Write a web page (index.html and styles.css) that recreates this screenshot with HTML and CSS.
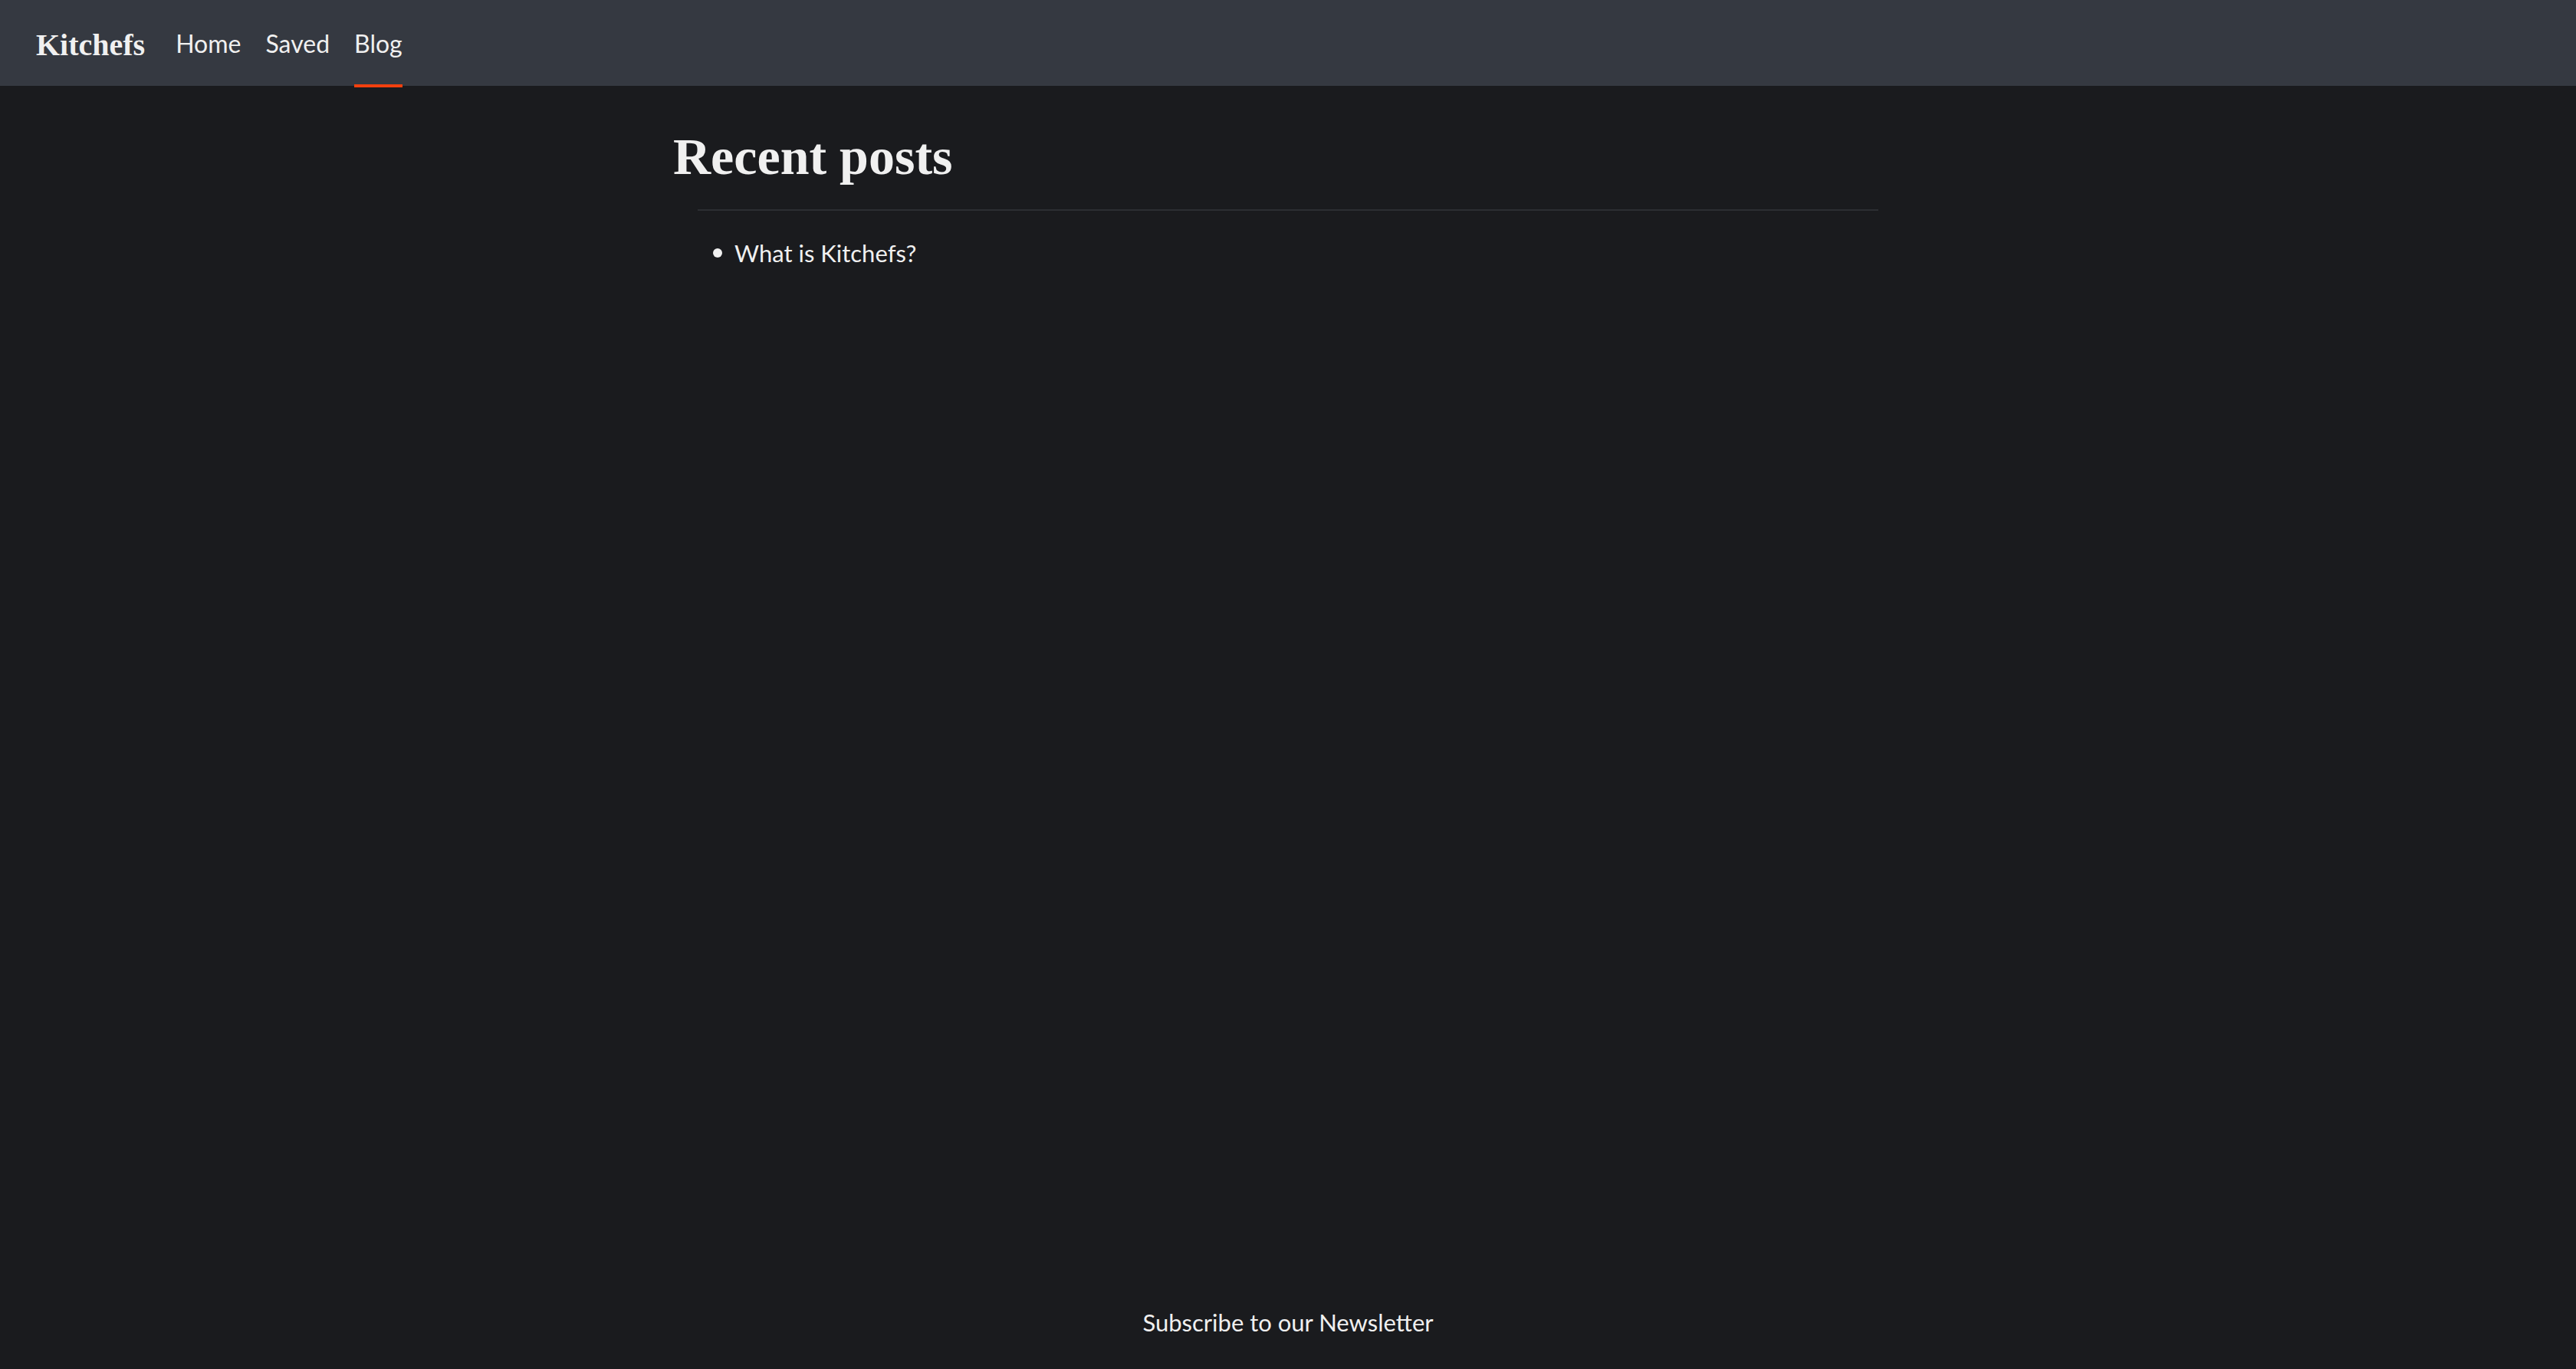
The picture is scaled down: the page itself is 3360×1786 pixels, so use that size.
FILE: index.html
```html
<!DOCTYPE html>
<html>
<head>
<meta charset="utf-8">
<link rel="stylesheet" href="styles.css">
</head>
<body>
<div class="page">
  <header class="nav">
    <a class="brand" href="#">Kitchefs</a>
    <nav class="links">
      <a class="link" href="#">Home</a>
      <a class="link" href="#">Saved</a>
      <a class="link active" href="#">Blog</a>
    </nav>
  </header>
  <main class="main">
    <h1 class="title">Recent posts</h1>
    <hr class="rule">
    <ul class="posts">
      <li class="post"><a href="#">What is Kitchefs?</a></li>
    </ul>
  </main>
  <footer class="footer">Subscribe to our Newsletter</footer>
</div>
</body>
</html>
```
FILE: styles.css
```css
html, body {
  margin: 0;
  padding: 0;
  background: #1a1b1e;
  color: #f0f0f0;
  font-family: "Lato", "Open Sans", sans-serif;
}
a { color: inherit; text-decoration: none; }
.page {
  min-height: 1786px;
  display: flex;
  flex-direction: column;
}
.nav {
  height: 112px;
  background: #353941;
  display: flex;
  align-items: center;
  padding-left: 47px;
  box-sizing: border-box;
}
.brand {
  font-family: "Liberation Serif", "DejaVu Serif", serif;
  font-weight: bold;
  font-size: 40px;
  margin-right: 40px;
  padding-top: 5px;
}
.links {
  display: flex;
  gap: 32px;
  height: 100%;
  align-items: center;
}
.link {
  font-size: 32px;
  height: 100%;
  display: flex;
  align-items: center;
  position: relative;
}
.link.active::after {
  content: "";
  position: absolute;
  left: 0;
  right: 0;
  bottom: -2px;
  height: 4px;
  background: #f2400e;
}
.main {
  flex: 1;
  width: 1604px;
  margin: 0 auto;
}
.title {
  font-family: "Liberation Serif", "DejaVu Serif", serif;
  font-weight: bold;
  font-size: 68px;
  line-height: 1;
  margin: 0;
  padding-top: 58px;
}
.rule {
  border: none;
  height: 2px;
  background: #2c2e32;
  margin: 35px 32px 0 32px;
}
.posts {
  list-style: none;
  margin: 0;
  padding: 36px 0 0 52px;
  font-size: 31px;
}
.post {
  display: flex;
  align-items: center;
  gap: 16px;
}
.post::before {
  content: "";
  width: 12px;
  height: 12px;
  border-radius: 50%;
  background: #f0f0f0;
  flex: none;
}
.footer {
  text-align: center;
  font-size: 31px;
  padding-bottom: 42px;
}
```
